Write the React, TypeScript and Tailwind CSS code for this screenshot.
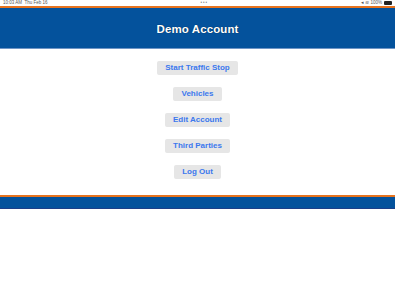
import React from "react";

const items = ["Start Traffic Stop", "Vehicles", "Edit Account", "Third Parties", "Log Out"];

const App: React.FC = () => {
    return (
        <div
            className="w-[395px] h-[296px] bg-white flex flex-col"
            style={{ fontFamily: '"Liberation Sans", Arial, sans-serif' }}
        >
            {/* status bar */}
            <div className="h-[6px] flex items-center justify-between px-[3px] text-[4.5px] leading-none text-[#555]">
                <span>10:03 AM&nbsp;&nbsp;Thu Feb 16</span>
                <span className="tracking-[1px] text-[#888]">•••</span>
                <span className="flex items-center gap-[2px]">
                    <span>◂ ≋ 100%</span>
                    <span className="w-[8px] h-[3.5px] bg-[#222] rounded-[1px]"></span>
                </span>
            </div>
            <div className="h-[2px] bg-[#e6731e]"></div>
            <div className="h-[41px] bg-[#04529c] border-b border-[#6f95c6] flex items-center justify-center pt-[4px]">
                <h1 className="text-white text-[11.5px] font-bold tracking-[0.1px] [text-shadow:0_0_1px_rgba(0,0,0,0.6)]">
                    Demo Account
                </h1>
            </div>

            <div className="flex flex-col items-center gap-[12px] pt-[12px] pb-[16px]">
                {items.map((label) => (
                    <button
                        key={label}
                        className="h-[14px] px-[8px] bg-[#e6e6e6] rounded-[2px] text-[#3b78ee] text-[8px] font-bold leading-none"
                    >
                        {label}
                    </button>
                ))}
            </div>

            <div className="h-[2px] bg-[#e6731e]"></div>
            <div className="h-[12px] bg-[#04529c] border-b border-[#1d3f88]"></div>
        </div>
    );
};

export default App;
